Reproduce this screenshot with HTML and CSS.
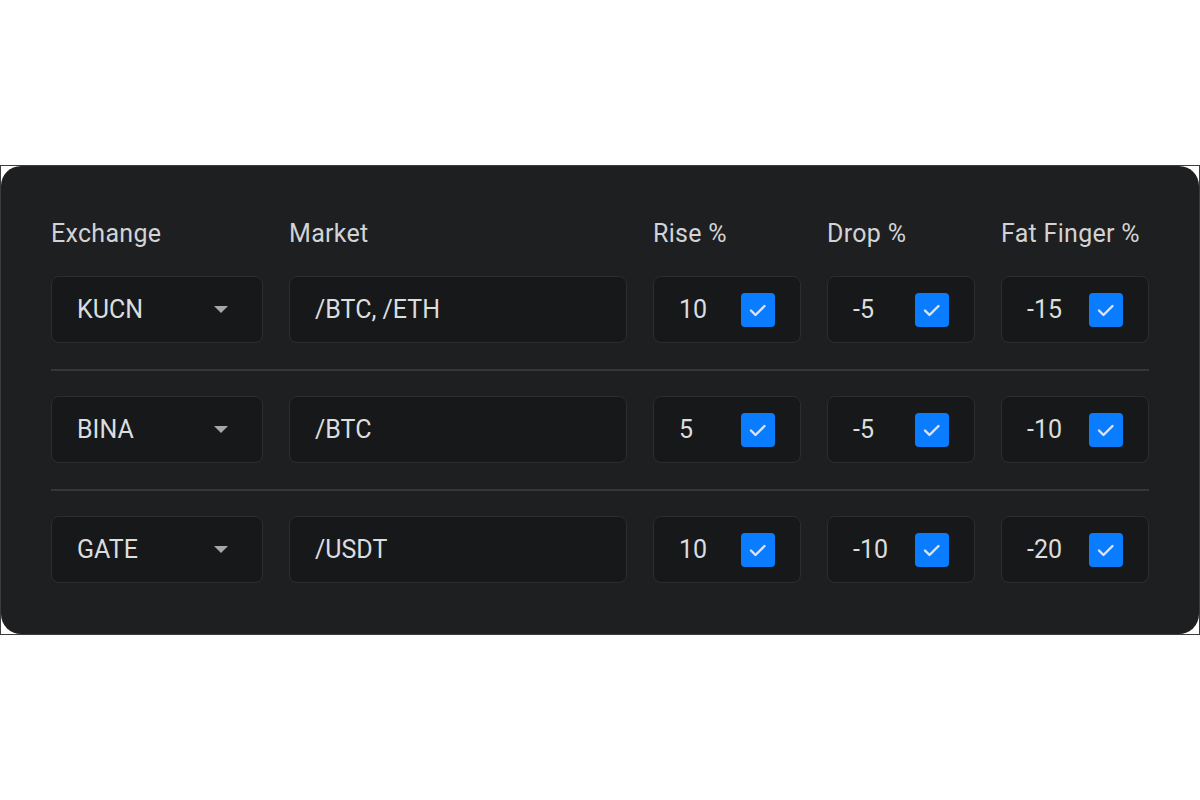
FILE: index.html
```html
<!DOCTYPE html>
<html lang="en">
<head>
  <meta charset="UTF-8">
  <title>Price Alerts</title>
  <link rel="stylesheet" href="styles.css">
</head>
<body>
  <div class="frame">
    <div class="card">
      <div class="row head">
        <span>Exchange</span>
        <span>Market</span>
        <span>Rise %</span>
        <span>Drop %</span>
        <span>Fat Finger %</span>
      </div>

      <div class="row item">
        <div class="field select">KUCN <span class="caret"></span></div>
        <div class="field">/BTC, /ETH</div>
        <div class="field num">10 <span class="check"><svg viewBox="0 0 34 34"><path d="M10 17.5l4.5 4.5 9-9"/></svg></span></div>
        <div class="field num">-5 <span class="check"><svg viewBox="0 0 34 34"><path d="M10 17.5l4.5 4.5 9-9"/></svg></span></div>
        <div class="field num">-15 <span class="check"><svg viewBox="0 0 34 34"><path d="M10 17.5l4.5 4.5 9-9"/></svg></span></div>
      </div>

      <div class="row item">
        <div class="field select">BINA <span class="caret"></span></div>
        <div class="field">/BTC</div>
        <div class="field num">5 <span class="check"><svg viewBox="0 0 34 34"><path d="M10 17.5l4.5 4.5 9-9"/></svg></span></div>
        <div class="field num">-5 <span class="check"><svg viewBox="0 0 34 34"><path d="M10 17.5l4.5 4.5 9-9"/></svg></span></div>
        <div class="field num">-10 <span class="check"><svg viewBox="0 0 34 34"><path d="M10 17.5l4.5 4.5 9-9"/></svg></span></div>
      </div>

      <div class="row item">
        <div class="field select">GATE <span class="caret"></span></div>
        <div class="field">/USDT</div>
        <div class="field num">10 <span class="check"><svg viewBox="0 0 34 34"><path d="M10 17.5l4.5 4.5 9-9"/></svg></span></div>
        <div class="field num">-10 <span class="check"><svg viewBox="0 0 34 34"><path d="M10 17.5l4.5 4.5 9-9"/></svg></span></div>
        <div class="field num">-20 <span class="check"><svg viewBox="0 0 34 34"><path d="M10 17.5l4.5 4.5 9-9"/></svg></span></div>
      </div>
    </div>
  </div>
</body>
</html>
```

FILE: styles.css
```css
* {
  box-sizing: border-box;
}

body {
  margin: 0;
  background: #fff;
  font-family: Roboto, "Liberation Sans", sans-serif;
}

.frame {
  margin-top: 165px;
  width: 1200px;
  height: 470px;
  border: 1px solid #3c3c3c;
  background: #fff;
}

.card {
  height: 100%;
  background: #1e1f21;
  border-radius: 20px;
  padding: 50px 50px 0;
}

.row {
  display: grid;
  grid-template-columns: 212px 338px 148px 148px 148px;
  column-gap: 26px;
}

.head {
  height: 34px;
  align-items: center;
  font-size: 25px;
  letter-spacing: 0.3px;
  color: #d2d3d5;
  margin-bottom: 26px;
}

.item {
  padding-bottom: 26px;
}

.item + .item {
  border-top: 2px solid #36373a;
  padding-top: 25px;
}

.item:last-child {
  padding-bottom: 0;
}

.field {
  height: 67px;
  background: #17181a;
  border: 1px solid #2c2d30;
  border-radius: 8px;
  display: flex;
  align-items: center;
  justify-content: space-between;
  padding: 0 25px;
  font-size: 25px;
  color: #dcdddf;
}

.select .caret {
  width: 0;
  height: 0;
  border-left: 7px solid transparent;
  border-right: 7px solid transparent;
  border-top: 7px solid #a6a7a9;
  margin-right: 9px;
}

.check {
  width: 34px;
  height: 34px;
  border-radius: 4px;
  background: #0a7cff;
  display: flex;
}

.check svg {
  width: 34px;
  height: 34px;
  fill: none;
  stroke: #dfe3ea;
  stroke-width: 2.4;
  stroke-linecap: round;
  stroke-linejoin: round;
}
```
